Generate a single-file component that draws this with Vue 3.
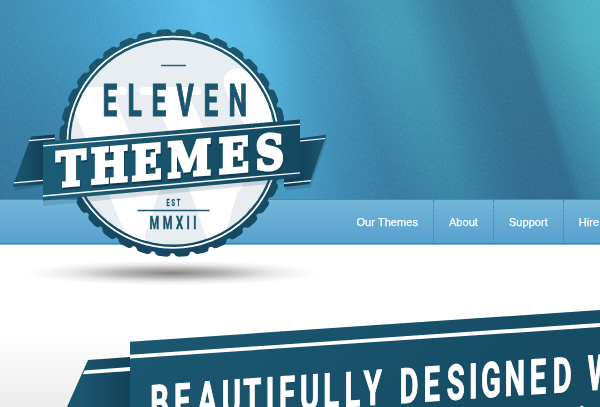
<script setup>
const links = ['Our Themes', 'About', 'Support', 'Hire Us']

const centre = { x: 173, y: 143 }

function polar(radius, degrees) {
  const a = (degrees * Math.PI) / 180
  return `${(centre.x + radius * Math.sin(a)).toFixed(2)} ${(centre.y - radius * Math.cos(a)).toFixed(2)}`
}

// Bottle-cap edge: 36 raised teeth, one every ten degrees.
function capEdge() {
  let d = ''
  for (let i = 0; i < 36; i++) {
    const a = i * 10
    d += `${i ? 'L' : 'M'}${polar(110.3, a)} L${polar(110.6, a + 1.2)} Q${polar(113.8, a + 1.5)} ${polar(114, a + 3.2)}`
    d += ` L${polar(113.8, a + 7.4)} Q${polar(113.2, a + 9)} ${polar(111.2, a + 9.2)} `
  }
  return d + 'Z'
}
const edge = capEdge()

// Glyph positions, converted into the horizontally condensed text space.
const spread = (xs, scale) => xs.map((x) => (x / scale).toFixed(2)).join(' ')

const eleven = spread([102.4, 127.4, 151.4, 176.4, 203.4, 228.4], 0.6)
const themes = spread([56.2, 90.8, 131.4, 167.6, 218.8, 255.6], 0.84)
const headline = spread(
  [150.2, 174, 197.6, 221.8, 243.2, 265.7, 279, 300, 323.2, 344.4, 363.8, 385, 399.4, 423.4, 446.7, 469, 481, 504.4, 529.8, 552.8, 575, 587.7],
  0.6
)
</script>

<template>
  <div class="page">
    <header class="curtain">
      <svg class="folds" viewBox="0 0 600 200" preserveAspectRatio="none">
        <defs>
          <linearGradient id="fold" gradientUnits="userSpaceOnUse" x1="-70" y1="0" x2="600" y2="0" gradientTransform="skewX(18)">
            <stop offset="0" stop-color="#3a7fa6" />
            <stop offset=".105" stop-color="#3c87ae" />
            <stop offset=".25" stop-color="#459bc8" />
            <stop offset=".4" stop-color="#59bbe8" />
            <stop offset=".47" stop-color="#55b5df" />
            <stop offset=".53" stop-color="#469bc5" />
            <stop offset=".6" stop-color="#3f89af" />
            <stop offset=".66" stop-color="#4297b5" />
            <stop offset=".7" stop-color="#4297b3" />
            <stop offset=".755" stop-color="#397d9f" />
            <stop offset=".8" stop-color="#36718f" />
            <stop offset=".864" stop-color="#35708f" />
            <stop offset=".88" stop-color="#3c89a6" />
            <stop offset=".95" stop-color="#4aa9bf" />
            <stop offset="1" stop-color="#4eb0c3" />
          </linearGradient>
          <linearGradient id="dusk" x1="0" y1="0" x2="0" y2="1">
            <stop offset=".2" stop-color="#285b85" stop-opacity="0" />
            <stop offset="1" stop-color="#285b85" stop-opacity=".4" />
          </linearGradient>
          <filter id="weave" x="0" y="0" width="100%" height="100%">
            <feTurbulence type="fractalNoise" baseFrequency=".6 .3" numOctaves="2" seed="4" />
            <feColorMatrix type="saturate" values="0" />
          </filter>
        </defs>
        <rect width="600" height="200" fill="url(#fold)" />
        <rect width="600" height="200" fill="url(#dusk)" />
        <rect class="weave" width="600" height="200" filter="url(#weave)" />
      </svg>
    </header>

    <nav class="bar">
      <a v-for="link in links" :key="link" class="link">{{ link }}</a>
    </nav>

    <main class="content">
      <svg class="hero" viewBox="0 245 600 162">
        <defs>
          <linearGradient id="slab" x1="0" y1="0" x2="1" y2=".2">
            <stop offset="0" stop-color="#1c5872" />
            <stop offset="1" stop-color="#164c64" />
          </linearGradient>
          <linearGradient id="tail" x1="0" y1="0" x2="1" y2="0">
            <stop offset=".25" stop-color="#1b556e" />
            <stop offset="1" stop-color="#124258" />
          </linearGradient>
          <radialGradient id="cast">
            <stop offset="0" stop-color="#777" stop-opacity=".9" />
            <stop offset=".35" stop-color="#888" stop-opacity=".62" />
            <stop offset=".7" stop-color="#999" stop-opacity=".2" />
            <stop offset="1" stop-color="#aaa" stop-opacity="0" />
          </radialGradient>
        </defs>
        <ellipse cx="172" cy="273" rx="148" ry="12.5" fill="url(#cast)" />
        <path d="M88 360 L130 357 V407 H67 Z" fill="url(#tail)" />
        <path d="M84.5 370.5 L130 367 V371 L82.8 374.3 Z" fill="#fff" />
        <path d="M130 341.7 L600 310 V407 H130 Z" fill="url(#slab)" />
        <path d="M130 354.8 L600 323 V327 L130 358.4 Z" fill="#fff" />
        <path d="M580 407 L581 405.7 H583 L583.5 407 Z" fill="#dfe8ec" />
        <text class="headline" transform="matrix(.6 -.0408 0 1 0 430.3)" :x="headline" y="0">BEAUTIFULLY DESIGNED W</text>
      </svg>
    </main>

    <svg class="badge" viewBox="0 0 340 270">
      <defs>
        <linearGradient id="ribbon" x1="0" y1="0" x2="1" y2="0">
          <stop offset="0" stop-color="#1d5c76" />
          <stop offset="1" stop-color="#144860" />
        </linearGradient>
        <linearGradient id="left-tail" x1="0" y1="0" x2="1" y2="0">
          <stop offset=".2" stop-color="#1a546d" />
          <stop offset=".75" stop-color="#113f56" />
        </linearGradient>
        <linearGradient id="right-tail" x1="0" y1="0" x2="1" y2="0">
          <stop offset=".3" stop-color="#123f57" />
          <stop offset=".8" stop-color="#1a526b" />
        </linearGradient>
        <linearGradient id="cap" x1="0" y1="0" x2="0" y2="1">
          <stop offset="0" stop-color="#1b5970" />
          <stop offset="1" stop-color="#154860" />
        </linearGradient>
        <clipPath id="disc"><circle cx="173" cy="142.3" r="102.3" /></clipPath>
      </defs>

      <path d="M31 136.8 L55 134.6 V181 L13 187.5 Z" fill="#123f56" opacity=".25" transform="translate(1 3)" />
      <path d="M31 136.4 L55 134.4 V183 L12.5 187 Z" fill="url(#left-tail)" />
      <path d="M29 140.6 L55 138.4 M14 182.8 L43 180.4" stroke="#f2f8fa" stroke-width="1.2" />

      <path :d="edge" fill="url(#cap)" />
      <circle cx="173" cy="142.2" r="105.6" fill="none" stroke="#fff" stroke-width="1.7" />
      <circle cx="173" cy="142.3" r="102.3" fill="#e8edf1" />
      <g clip-path="url(#disc)" fill="#fff">
        <rect x="72" y="87" width="55" height="8" rx="4" />
        <rect x="140" y="87" width="61" height="8" rx="4" />
        <path d="M78 92 H87 L148 245 H130 L72 105 Z" />
        <path d="M84 92 H112 L157 197 L142 245 H132 Z" />
        <path d="M151 92 H187 L236 197 L222 245 H209 L176 152 L157 197 L150 222 L142 190 L168 130 Z" />
        <path d="M224 84 C222 72 234 67 241 69 C254 73 264 88 272 110 L266 150 L235 197 L222 190 L248 138 C245 115 227 103 224 84 Z" />
      </g>

      <path d="M284 140 L326 135 L309.5 184.5 L284 187 Z" fill="#123f56" opacity=".25" transform="translate(1 3)" />
      <path d="M284 140.5 L326.3 134.8 L309.5 184 L284 187 Z" fill="url(#right-tail)" />
      <path d="M299 141.2 L325 138.5 M284 183.3 L311 180.6" stroke="#f2f8fa" stroke-width="1.2" />

      <path d="M43 141 L300 119.5 V180 L43 205 Z" fill="#123f56" opacity=".16" transform="translate(0 1)" />
      <path d="M43 141.8 L300 119.5 V177.2 L43 200.6 Z" fill="url(#ribbon)" />
      <path d="M43 145.9 L300 124.4 M43 196 L300 172.8" stroke="#f2f8fa" stroke-width="1.3" />

      <path d="M161 65.5 H186" stroke="#2b6179" stroke-width="1.5" />
      <text class="condensed eleven" transform="scale(.6 1)" :x="eleven" y="115.8">ELEVEN</text>
      <text class="slab shade" transform="matrix(.84 -.0685 0 1 0.8 193.2)" :x="themes" y="0">THEMES</text>
      <text class="slab" transform="matrix(.84 -.0685 0 1 0 191)" :x="themes" y="0">THEMES</text>
      <text class="condensed est" transform="translate(166.4 205.6) scale(.62 1)">EST</text>
      <path d="M137.5 210.5 H209.5" stroke="#1d566e" stroke-width="1.3" />
      <text class="condensed year" transform="translate(149.4 229) scale(.62 1)">MMXII</text>
    </svg>
  </div>
</template>

<style>
body {
  margin: 0;
  overflow: hidden;
}
</style>

<style scoped>
.page {
  position: relative;
  display: flex;
  flex-direction: column;
  width: 600px;
  height: 407px;
  overflow: hidden;
  background: #fff;
  font-family: "Liberation Sans", Arial, sans-serif;
}
.curtain {
  height: 199px;
}
.folds {
  display: block;
  width: 100%;
  height: 100%;
}
.weave {
  opacity: 0.2;
  mix-blend-mode: overlay;
}
.bar {
  box-sizing: border-box;
  display: flex;
  flex: none;
  height: 46px;
  padding-left: 341.5px;
  overflow: hidden;
  border-top: 1px solid #438bb7;
  border-bottom: 1px solid #74b3d2;
  background: linear-gradient(#72b6d9, #58a0ce);
  box-shadow: inset 0 -1px #4083b0;
}
.link {
  flex: none;
  padding: 0 15px;
  border-right: 1px dotted #3c7fa9;
  color: #fff;
  font-size: 11px;
  line-height: 45px;
  letter-spacing: 0.05px;
  white-space: nowrap;
  -webkit-text-stroke: 0.25px #fff;
}
.content {
  flex: 1;
  background: linear-gradient(#fff 55%, #ececec);
}
.hero {
  display: block;
  width: 600px;
  height: 162px;
}
.badge {
  position: absolute;
  top: 0;
  left: 0;
  width: 340px;
  height: 270px;
}
.headline {
  fill: #fff;
  font: 700 48.5px Roboto, sans-serif;
  stroke: #fff;
  stroke-width: 1.1px;
}
.condensed {
  fill: #1b556e;
  stroke: #1b556e;
  font-family: Roboto, sans-serif;
  font-weight: 700;
}
.eleven {
  font-size: 43.8px;
  stroke-width: 1.1px;
}
.est {
  font-size: 9px;
  letter-spacing: 3px;
  stroke-width: 0.3px;
}
.year {
  font-size: 18px;
  letter-spacing: 5.6px;
  stroke-width: 0.5px;
}
.slab {
  fill: #fff;
  stroke: #fff;
  stroke-width: 3.4px;
  font: 700 47px "DejaVu Serif", serif;
}
.shade {
  fill: #103c52;
  stroke: #103c52;
}
</style>
